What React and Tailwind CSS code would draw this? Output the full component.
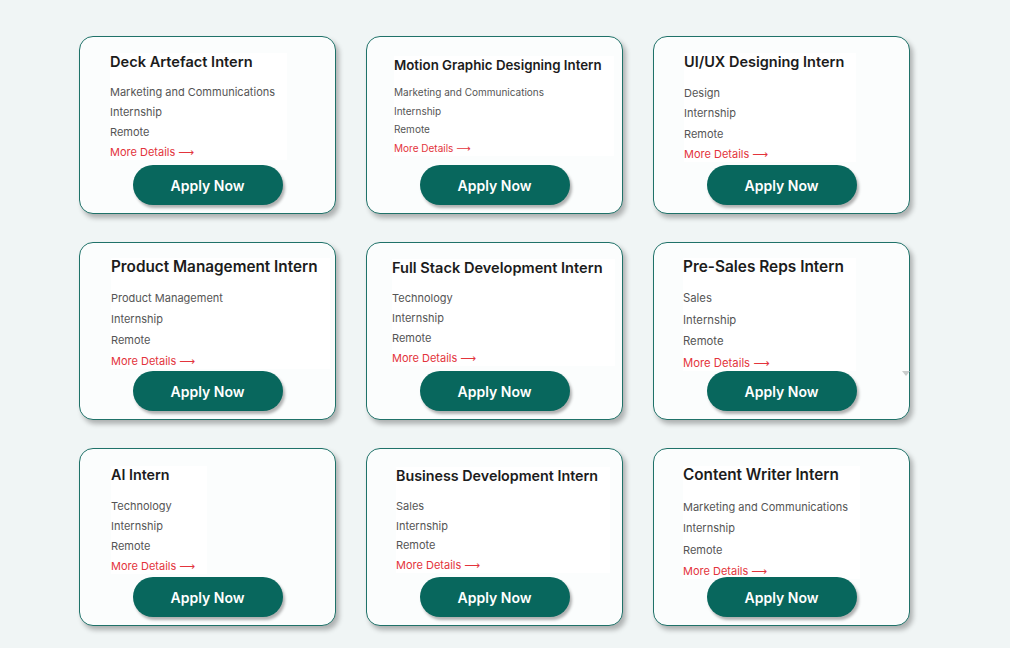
import React from 'react';

const jobs = [
  { title: 'Deck Artefact Intern', dept: 'Marketing and Communications', left: 'pl-[30px]', top: 'pt-[16px]', title_cls: 'text-[14.6px]', text: 'text-[11px]', gap: 'gap-[6px]', mt: 'mt-[14px]' },
  { title: 'Motion Graphic Designing Intern', dept: 'Marketing and Communications', left: 'pl-[27px]', top: 'pt-[19px]', title_cls: 'text-[13.3px]', text: 'text-[10px]', gap: 'gap-[4.5px]', mt: 'mt-[11px]' },
  { title: 'UI/UX Designing Intern', dept: 'Design', left: 'pl-[30px]', top: 'pt-[16px]', title_cls: 'text-[14.5px]', text: 'text-[11px]', gap: 'gap-[6.3px]', mt: 'mt-[15px]' },
  { title: 'Product Management Intern', dept: 'Product Management', left: 'pl-[31px]', top: 'pt-[15px]', title_cls: 'text-[15.3px]', text: 'text-[11px]', gap: 'gap-[7px]', mt: 'mt-[15px]' },
  { title: 'Full Stack Development Intern', dept: 'Technology', left: 'pl-[25px]', top: 'pt-[16px]', title_cls: 'text-[14.6px]', text: 'text-[11px]', gap: 'gap-[6px]', mt: 'mt-[14px]' },
  { title: 'Pre-Sales Reps Intern', dept: 'Sales', left: 'pl-[29px]', top: 'pt-[15px]', title_cls: 'text-[15.4px]', text: 'text-[11.3px]', gap: 'gap-[7.5px]', mt: 'mt-[15px]' },
  { title: 'AI Intern', dept: 'Technology', left: 'pl-[31px]', top: 'pt-[17px]', title_cls: 'text-[14.3px]', text: 'text-[11px]', gap: 'gap-[6px]', mt: 'mt-[15px]' },
  { title: 'Business Development Intern', dept: 'Sales', left: 'pl-[29px]', top: 'pt-[18px]', title_cls: 'text-[14.3px]', text: 'text-[11px]', gap: 'gap-[5.5px]', mt: 'mt-[14px]' },
  { title: 'Content Writer Intern', dept: 'Marketing and Communications', left: 'pl-[29px]', top: 'pt-[17px]', title_cls: 'text-[15.3px]', text: 'text-[11px]', gap: 'gap-[7.3px]', mt: 'mt-[16px]' },
];

const JobCard = ({ job }) => (
  <div className={`relative h-[178px] rounded-[14px] border-[1.5px] border-[#1f7269] bg-[#fbfdfd] shadow-[3px_4px_5px_rgba(0,0,0,0.28)] ${job.left} ${job.top}`}>
    <div className="inline-block bg-white pr-3">
      <h3 className={`${job.title_cls} font-semibold leading-[18px] text-[#1c1c1c]`}>{job.title}</h3>
      <div className={`flex flex-col ${job.gap} ${job.mt} ${job.text} leading-[14px] text-[#555]`}>
        <span>{job.dept}</span>
        <span>Internship</span>
        <span>Remote</span>
        <span className="text-[#e3343c]">
          More Details <span style={{ fontFamily: '"DejaVu Sans", sans-serif' }}>&#x27F6;</span>
        </span>
      </div>
    </div>
    <div className="absolute bottom-[8px] left-0 right-0 flex justify-center">
      <button className="h-[40px] w-[150px] rounded-full bg-[#08675d] text-[14px] font-semibold text-white shadow-[2px_3px_3px_rgba(0,0,0,0.3)]">
        Apply Now
      </button>
    </div>
  </div>
);

export default function App() {
  return (
    <div className="relative min-h-[648px] bg-[#f0f5f5] pl-[79px] pt-[36px]" style={{ fontFamily: 'Inter, "Noto Sans", sans-serif' }}>
      <div className="grid w-[831px] grid-cols-[257px_257px_257px] gap-x-[30px] gap-y-[28px]">
        {jobs.map((job) => (
          <JobCard key={job.title} job={job} />
        ))}
      </div>
      <div className="absolute left-[902px] top-[371px] h-0 w-0 border-x-[4px] border-t-[5px] border-x-transparent border-t-[#c8cccc]" />
    </div>
  );
}
